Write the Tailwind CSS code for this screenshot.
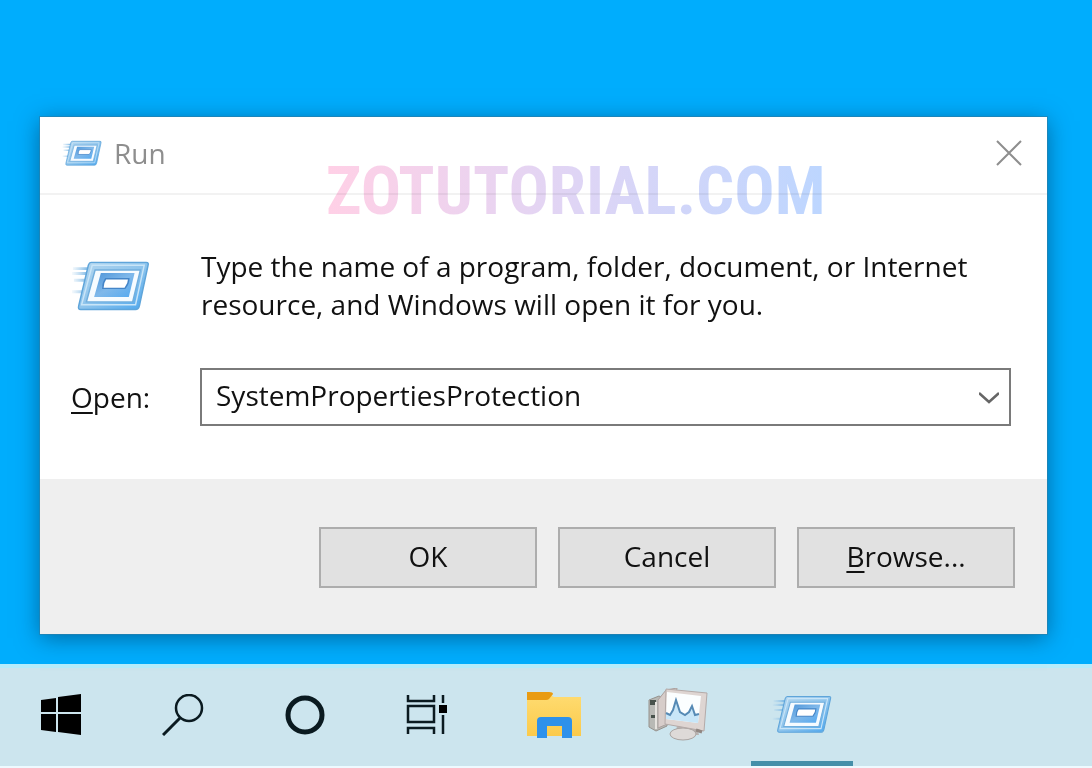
<!DOCTYPE html>
<html lang="en">
  <head>
    <meta charset="UTF-8" />
    <meta name="viewport" content="width=device-width, initial-scale=1.0" />
    <title>Run</title>
    <script src="https://cdn.jsdelivr.net/npm/@tailwindcss/browser@4"></script>
  </head>
  <body class="min-h-screen flex flex-col bg-[#00adfd] font-['Open_Sans','Noto_Sans',sans-serif] text-[28px] leading-[38px] text-[#111]">
    <!-- Shared icon -->
    <svg class="absolute w-0 h-0" aria-hidden="true">
      <defs>
        <linearGradient id="frame" x1="0" y1="0" x2="1" y2="1">
          <stop offset="0" stop-color="#b5d7ef" />
          <stop offset="0.5" stop-color="#8ec4ec" />
          <stop offset="1" stop-color="#4ba6ee" />
        </linearGradient>
        <linearGradient id="screen" x1="0" y1="0" x2="1" y2="1">
          <stop offset="0" stop-color="#4d94d8" />
          <stop offset="0.5" stop-color="#7fb8ea" />
          <stop offset="1" stop-color="#54a9f0" />
        </linearGradient>
        <linearGradient id="trail" x1="0" y1="0" x2="1" y2="0">
          <stop offset="0" stop-color="#9cc9ea" stop-opacity="0.1" />
          <stop offset="1" stop-color="#6fb0e2" />
        </linearGradient>
        <symbol id="run-icon" viewBox="0 0 82 54">
          <path d="M2 8h17v3H2zM1 13h17v3H1zM3 20h13v3H3zM1 32h12v3H1z" fill="url(#trail)" />
          <path d="M21 3h57q3 0 2 3L71 48q-1 4-4 4H10q-3 0-2-4L18 6q1-3 3-3z" fill="url(#frame)" stroke="#5fa5da" stroke-width="1.500" />
          <path d="M22 6h54L67 47H11z" fill="none" stroke="#c9e5f8" stroke-width="1.500" />
          <path d="M25 11h47l-8 33H16z" fill="#f6fbff" stroke="#71aedd" stroke-width="1.500" />
          <path d="M31 14h35l-6 25H24z" fill="url(#screen)" />
          <path d="M36 20h24q0 5-4 10H33q0-6 3-10z" fill="#fff" stroke="#4485c8" stroke-width="1.500" />
        </symbol>
      </defs>
    </svg>

    <main class="flex-1 flex flex-col pt-[117px] pb-[30px] pl-10 pr-[45px]">
      <!-- Run dialog -->
      <section class="relative flex-1 flex flex-col bg-white outline outline-[#2680ac]/70 shadow-[0_4px_22px_rgba(0,50,85,0.55)]">
        <header class="flex items-center h-[78px] pl-[22px] pr-6 pb-1 border-b-2 border-[#f2f2f2]">
          <svg class="w-10 h-7"><use href="#run-icon" /></svg>
          <h1 class="ml-3 text-[#8e8e8e]">Run</h1>
          <button type="button" aria-label="Close" class="ml-auto">
            <svg class="w-7 h-7" viewBox="0 0 28 28" fill="none" stroke="#8e8e8e" stroke-width="2"><path d="M2 2l24 24M26 2L2 26" /></svg>
          </button>
        </header>

        <form id="run-form" class="flex-1 pl-[31px] pr-9 pt-[52px]">
          <div class="flex gap-[51px]">
            <svg class="w-[79px] h-[53px] mt-3 shrink-0"><use href="#run-icon" /></svg>
            <p>Type the name of a program, folder, document, or Internet<br />resource, and Windows will open it for you.</p>
          </div>
          <div class="flex items-center mt-[45px]">
            <label for="open" class="w-[129px] shrink-0"><span class="underline decoration-2 underline-offset-4">O</span>pen:</label>
            <div class="relative flex-1">
              <select id="open" name="open" class="appearance-none block w-full h-[58px] pl-3.5 pr-12 pb-1 bg-white border-2 border-[#7a7a7a] outline-none">
                <option>SystemPropertiesProtection</option>
              </select>
              <svg class="absolute right-3 top-6 w-5 h-3 pointer-events-none" viewBox="0 0 20 12" fill="none" stroke="#666" stroke-width="2.500"><path d="M0 1l10 9 10-9" /></svg>
            </div>
          </div>
        </form>

        <footer class="flex justify-end gap-[21px] h-[155px] pt-12 pr-8 bg-[#efefef]">
          <button type="submit" form="run-form" class="w-[218px] h-[61px] pb-1 bg-[#e1e1e1] border-2 border-[#adadad]">OK</button>
          <button type="button" class="w-[218px] h-[61px] pb-1 bg-[#e1e1e1] border-2 border-[#adadad]">Cancel</button>
          <button type="button" class="w-[218px] h-[61px] pb-1 bg-[#e1e1e1] border-2 border-[#adadad]"><span class="underline decoration-2 underline-offset-4">B</span>rowse...</button>
        </footer>

        <!-- Watermark -->
        <div class="absolute left-[286px] top-[34px] font-['Roboto_Condensed','Roboto',sans-serif] font-bold text-[67px] leading-[80px] text-transparent bg-clip-text bg-linear-to-r from-[#ffd0e6] via-[#dfd5f5] to-[#bcd6ff] mix-blend-multiply pointer-events-none">ZOTUTORIAL.COM</div>
      </section>
    </main>

    <!-- Taskbar -->
    <nav class="flex h-[104px] bg-[#cce5ee] border-t-4 border-t-[#b5ecfb] border-b-2 border-b-[#eefaff]">
      <button type="button" aria-label="Start" class="w-[122px] pb-1 flex items-center justify-center">
        <svg class="w-[42px] h-[42px]" viewBox="0 0 42 42"><path d="M1 6l15-2v14H1zM18 3l23-3v18H18zM1 20h15v18L1 36zM18 20h23v21l-23-3z" /></svg>
      </button>
      <button type="button" aria-label="Search" class="w-[122px] pb-1 flex items-center justify-center">
        <svg class="w-[42px] h-[42px]" viewBox="0 0 42 42" fill="none" stroke="#0a1a20"><circle cx="27" cy="14" r="13" stroke-width="2.500" /><path d="M18 24L1 41" stroke-width="3" /></svg>
      </button>
      <button type="button" aria-label="Cortana" class="w-[122px] pb-1 flex items-center justify-center">
        <svg class="w-[42px] h-[42px]" viewBox="0 0 42 42" fill="none" stroke="#0a1a20" stroke-width="5"><circle cx="21" cy="21" r="17" /></svg>
      </button>
      <button type="button" aria-label="Task View" class="w-[122px] pb-1 flex items-center justify-center">
        <svg class="w-[42px] h-[42px]" viewBox="0 0 42 42" fill="none" stroke="#0a1a20" stroke-width="2.500"><path d="M2 1v6h26V1M2 12h26v16H2zM2 40v-6h26v6M37 1v8M37 21v19" /><path d="M33 11h8v8h-8z" fill="#000" stroke="none" /></svg>
      </button>
      <button type="button" aria-label="File Explorer" class="ml-1 w-[124px] pb-1 flex items-center justify-center">
        <svg class="w-[54px] h-[46px]" viewBox="0 0 54 46">
          <defs><linearGradient id="folder" x1="0" y1="0" x2="0" y2="1"><stop offset="0" stop-color="#ffdc72" /><stop offset="1" stop-color="#fbca4b" /></linearGradient></defs>
          <path d="M0 1h24q2 0 1 3l2 1h27v39H0z" fill="url(#folder)" />
          <path d="M0 0h22q4 0 4 2l-4 5q-1 1-3 1H0z" fill="#e99b12" />
          <path d="M10 46V29q0-4 4-4h27q4 0 4 4v17H35V34H20v12z" fill="#2e91ea" />
        </svg>
      </button>
      <button type="button" aria-label="Performance Monitor" class="w-[124px] pb-1 flex items-center justify-center">
        <svg class="w-[60px] h-[54px]" viewBox="0 0 60 54">
          <path d="M1 12l10-4 8 4v26L8 43l-7-4z" fill="#b8b9b5" stroke="#96928d" />
          <path d="M2 12h6v5H2zM3 27h4v3H3z" fill="#48524c" />
          <path d="M8 14v27" stroke="#e6e3df" stroke-width="2" />
          <path d="M18 2l11-2-5 34-14 6V12z" fill="#d7cdca" stroke="#aaa09d" />
          <path d="M29 36l20 3 2 8H28z" fill="#b9b3b1" />
          <ellipse cx="35" cy="46" rx="13" ry="6" fill="#dedad8" stroke="#aaa4a1" />
          <path d="M18 1l41 4-3 38-39-7z" fill="#ded5d2" stroke="#b4aaa8" />
          <path d="M19 4l34 4-3 27-32-4z" fill="#fbfeff" />
          <path d="M18 25l4 2 3-5 3-10 4 12 5 3 4-3 3-6 3 9 4-1-1 9-32-4z" fill="#c8e6f8" />
          <path d="M18 25l4 2 3-5 3-10 4 12 5 3 4-3 3-6 3 9 4-1" fill="none" stroke="#568ab5" stroke-width="2" />
          <path d="M48 42l6 2" stroke="#918782" stroke-width="3" />
        </svg>
      </button>
      <button type="button" aria-label="Run" class="w-[124px] flex flex-col items-center justify-between">
        <svg class="w-[60px] h-10 mt-[26px]"><use href="#run-icon" /></svg>
        <span class="w-[102px] h-[5px] bg-[#458fa9]"></span>
      </button>
    </nav>
  </body>
</html>
